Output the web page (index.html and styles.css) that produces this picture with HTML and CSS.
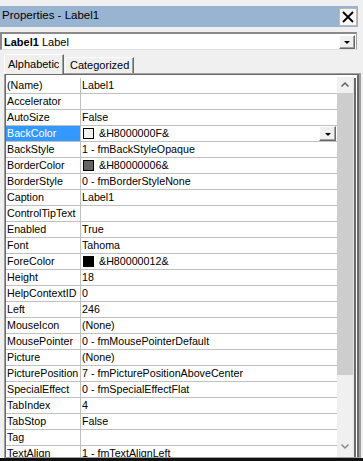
FILE: index.html
```html
<!DOCTYPE html>
<html lang="en">
<head>
    <meta charset="UTF-8">
    <meta name="viewport" content="width=device-width, initial-scale=1.0">
    <title>Properties - Label1</title>
    <link rel="stylesheet" href="styles.css">
</head>
<body>
    <div class="window">
        <div class="titlebar">
            <span class="title">Properties - Label1</span>
            <span class="close-btn">
                <svg width="16" height="16" viewBox="0 0 16 16">
                    <path d="M3 3 L13 13 M13 3 L3 13" stroke="#000" stroke-width="1.8" fill="none"/>
                </svg>
            </span>
        </div>

        <div class="object-combo">
            <span class="object-name"><b>Label1</b> Label</span>
            <span class="drop-btn"><i class="arrow-down"></i></span>
        </div>

        <div class="tabs">
            <div class="tab active">Alphabetic</div>
            <div class="tab">Categorized</div>
        </div>

        <div class="page">
            <div class="list">
                <div class="rows">
                    <div class="prop-row"><div class="prop-name">(Name)</div><div class="prop-value">Label1</div></div>
                    <div class="prop-row"><div class="prop-name">Accelerator</div><div class="prop-value"></div></div>
                    <div class="prop-row"><div class="prop-name">AutoSize</div><div class="prop-value">False</div></div>
                    <div class="prop-row selected">
                        <div class="prop-name">BackColor</div>
                        <div class="prop-value"><span class="swatch swatch-face"></span>&amp;H8000000F&amp;<span class="drop-btn cell-btn"><i class="arrow-down"></i></span></div>
                    </div>
                    <div class="prop-row"><div class="prop-name">BackStyle</div><div class="prop-value">1 - fmBackStyleOpaque</div></div>
                    <div class="prop-row"><div class="prop-name">BorderColor</div><div class="prop-value"><span class="swatch swatch-shadow"></span>&amp;H80000006&amp;</div></div>
                    <div class="prop-row"><div class="prop-name">BorderStyle</div><div class="prop-value">0 - fmBorderStyleNone</div></div>
                    <div class="prop-row"><div class="prop-name">Caption</div><div class="prop-value">Label1</div></div>
                    <div class="prop-row"><div class="prop-name">ControlTipText</div><div class="prop-value"></div></div>
                    <div class="prop-row"><div class="prop-name">Enabled</div><div class="prop-value">True</div></div>
                    <div class="prop-row"><div class="prop-name">Font</div><div class="prop-value">Tahoma</div></div>
                    <div class="prop-row"><div class="prop-name">ForeColor</div><div class="prop-value"><span class="swatch swatch-text"></span>&amp;H80000012&amp;</div></div>
                    <div class="prop-row"><div class="prop-name">Height</div><div class="prop-value">18</div></div>
                    <div class="prop-row"><div class="prop-name">HelpContextID</div><div class="prop-value">0</div></div>
                    <div class="prop-row"><div class="prop-name">Left</div><div class="prop-value">246</div></div>
                    <div class="prop-row"><div class="prop-name">MouseIcon</div><div class="prop-value">(None)</div></div>
                    <div class="prop-row"><div class="prop-name">MousePointer</div><div class="prop-value">0 - fmMousePointerDefault</div></div>
                    <div class="prop-row"><div class="prop-name">Picture</div><div class="prop-value">(None)</div></div>
                    <div class="prop-row"><div class="prop-name">PicturePosition</div><div class="prop-value">7 - fmPicturePositionAboveCenter</div></div>
                    <div class="prop-row"><div class="prop-name">SpecialEffect</div><div class="prop-value">0 - fmSpecialEffectFlat</div></div>
                    <div class="prop-row"><div class="prop-name">TabIndex</div><div class="prop-value">4</div></div>
                    <div class="prop-row"><div class="prop-name">TabStop</div><div class="prop-value">False</div></div>
                    <div class="prop-row"><div class="prop-name">Tag</div><div class="prop-value"></div></div>
                    <div class="prop-row"><div class="prop-name">TextAlign</div><div class="prop-value">1 - fmTextAlignLeft</div></div>
                </div>

                <div class="scrollbar">
                    <div class="scroll-arrow">
                        <svg width="16" height="16" viewBox="0 0 16 16">
                            <path d="M4.5 9.5 L8 6 L11.5 9.5" stroke="#606060" stroke-width="1.5" fill="none"/>
                        </svg>
                    </div>
                    <div class="scroll-thumb"></div>
                    <div class="scroll-track"></div>
                    <div class="scroll-arrow bottom">
                        <svg width="16" height="16" viewBox="0 0 16 16">
                            <path d="M4.5 6.5 L8 10 L11.5 6.5" stroke="#8a8a8a" stroke-width="1.5" fill="none"/>
                        </svg>
                    </div>
                </div>
                <div class="edge"></div>
            </div>
        </div>
    </div>
    <div class="taskbar"></div>
</body>
</html>
```

FILE: styles.css
```css
body {
    margin: 0;
    height: 461px;
    overflow: hidden;
    display: flex;
    flex-direction: column;
    background-color: #f0f0f0;
    font-family: "Liberation Sans", Arial, sans-serif;
    font-size: 11px;
    color: #000;
}

.window {
    display: flex;
    flex-direction: column;
}

/* title bar */
.titlebar {
    margin-top: 6px;
    width: 358px;
    height: 21px;
    background-color: #99b4d1;
    display: flex;
    justify-content: space-between;
    align-items: flex-start;
}

.title {
    padding: 2px 0 0 2px;
    font-size: 11.5px;
    line-height: 14px;
}

.close-btn {
    margin: 2px 1px 0 0;
    width: 18px;
    height: 18px;
    box-sizing: border-box;
    border: 1px solid #b9b9b9;
    background-color: #f7f7f7;
    display: flex;
    align-items: center;
    justify-content: center;
}

/* object combo */
.object-combo {
    margin-top: 5px;
    width: 357px;
    height: 18px;
    box-sizing: border-box;
    border-top: 2px solid #8a8a8a;
    border-left: 2px solid #8a8a8a;
    border-right: 1px solid #a0a0a0;
    border-bottom: 1px solid #e3e3e3;
    background-color: #fff;
    display: flex;
    align-items: center;
    justify-content: space-between;
}

.object-name {
    padding-left: 2px;
    line-height: 14px;
}

.drop-btn {
    width: 16px;
    height: 14px;
    margin-right: 1px;
    box-sizing: border-box;
    border-top: 1px solid #fff;
    border-left: 1px solid #fff;
    border-right: 1px solid #696969;
    border-bottom: 1px solid #696969;
    box-shadow: inset -1px -1px #a0a0a0;
    background-color: #f0f0f0;
    display: flex;
    align-items: center;
    justify-content: center;
}

.arrow-down {
    width: 0;
    height: 0;
    border-left: 3px solid transparent;
    border-right: 3px solid transparent;
    border-top: 3px solid #000;
    margin-top: 1px;
}

/* tabs */
.tabs {
    margin-top: 4px;
    height: 19px;
    padding-left: 4px;
    display: flex;
    align-items: flex-end;
    gap: 1px;
}

.tab {
    box-sizing: border-box;
    height: 16px;
    padding: 0 0 0 4px;
    border-top: 1px solid #fff;
    border-left: 1px solid #fff;
    border-right: 1px solid #696969;
    box-shadow: inset -1px 0 #a0a0a0;
    line-height: 15px;
    width: 69px;
}

.tab.active {
    height: 20px;
    width: 60px;
    margin-bottom: -1px;
    padding-left: 3px;
    line-height: 18px;
    position: relative;
    background-color: #f0f0f0;
}

/* property page */
.page {
    margin-left: 4px;
    width: 357px;
    height: 385px;
    box-sizing: border-box;
    border-top: 1px solid #a0a0a0;
    border-left: 1px solid #a0a0a0;
    border-right: 2px solid #a0a0a0;
    border-bottom: 1px solid #a0a0a0;
}

.list {
    height: 100%;
    box-sizing: border-box;
    border-top: 1px solid #696969;
    border-left: 1px solid #696969;
    border-right: 2px solid #696969;
    padding-top: 3px;
    background-color: #fff;
    display: flex;
}

.rows {
    width: 331px;
    overflow: hidden;
    font-size: 10.7px;
}

.prop-row {
    display: grid;
    grid-template-columns: 75px 1fr;
    height: 16px;
    box-sizing: border-box;
    border-bottom: 1px solid #c0c0c0;
    line-height: 15px;
    white-space: nowrap;
}

.prop-name {
    padding-left: 1px;
    border-right: 1px solid #c0c0c0;
    overflow: hidden;
}

.prop-value {
    padding-left: 1px;
    display: flex;
    align-items: center;
    overflow: hidden;
}

.selected .prop-name {
    background-color: #3399ff;
    color: #fff;
}

.swatch {
    width: 11px;
    height: 11px;
    box-sizing: border-box;
    border: 1px solid #000;
    margin: 0 5px 0 1px;
}

.swatch-face {
    background-color: #f0f0f0;
}

.swatch-shadow {
    background-color: #646464;
}

.swatch-text {
    background-color: #000;
}

.cell-btn {
    margin-left: auto;
    width: 17px;
    height: 15px;
}

/* scrollbar */
.scrollbar {
    width: 16px;
    margin-top: -1px;
    border-right: 1px solid #e3e3e3;
    display: flex;
    flex-direction: column;
    background-color: #f0f0f0;
}

.scroll-arrow {
    height: 16px;
    display: flex;
    align-items: center;
    justify-content: center;
}

.scroll-arrow.bottom {
    margin-bottom: 3px;
}

.scroll-thumb {
    height: 282px;
    background-color: #cdcdcd;
}

.scroll-track {
    flex: 1;
}

.edge {
    width: 1px;
    border-left: 2px solid #696969;
    background-color: #fff;
}

.taskbar {
    height: 3px;
    background-color: #111;
}
```
